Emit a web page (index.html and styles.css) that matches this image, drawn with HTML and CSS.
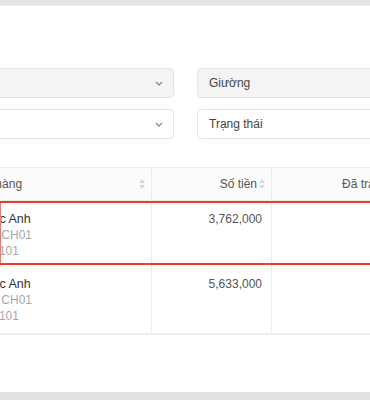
FILE: index.html
```html
<!DOCTYPE html>
<html lang="vi">
<head>
    <meta charset="UTF-8">
    <meta name="viewport" content="width=device-width, initial-scale=1.0">
    <title>Hóa đơn</title>
    <link rel="stylesheet" href="styles.css">
</head>
<body>
    <div class="topbar"></div>

    <div class="page">
        <div class="filters">
            <div class="field field-gray">
                <span class="field-text">Phòng</span>
                <svg class="chevron" width="8" height="5" viewBox="0 0 8 5"><path d="M1 1l3 3 3-3" fill="none" stroke="#8a8a95" stroke-width="1.3"/></svg>
            </div>
            <div class="field field-gray">
                <span class="field-text">Giường</span>
            </div>
            <div class="field">
                <span class="field-text">Tháng</span>
                <svg class="chevron" width="8" height="5" viewBox="0 0 8 5"><path d="M1 1l3 3 3-3" fill="none" stroke="#8a8a95" stroke-width="1.3"/></svg>
            </div>
            <div class="field">
                <span class="field-text">Trạng thái</span>
            </div>
        </div>

        <div class="bills">
            <div class="row head">
                <div class="cell col-customer">
                    <span>Khách hàng</span>
                    <span class="sort"></span>
                </div>
                <div class="cell col-amount">
                    <span>Số tiền</span>
                    <span class="sort"></span>
                </div>
                <div class="cell col-paid">
                    <span>Đã trả</span>
                </div>
            </div>

            <div class="row item selected">
                <div class="cell col-customer">
                    <div class="name">Nguyễn Ngọc Anh</div>
                    <div class="sub">Phòng: CH01</div>
                    <div class="sub">Giường: 101</div>
                </div>
                <div class="cell col-amount">3,762,000</div>
                <div class="cell col-paid"></div>
            </div>

            <div class="row item last">
                <div class="cell col-customer">
                    <div class="name">Nguyễn Ngọc Anh</div>
                    <div class="sub">Phòng: CH01</div>
                    <div class="sub">Giường: 101</div>
                </div>
                <div class="cell col-amount">5,633,000</div>
                <div class="cell col-paid"></div>
            </div>
        </div>
    </div>

    <div class="bottombar"></div>
</body>
</html>
```

FILE: styles.css
```css
body {
    font-family: 'Liberation Sans', Arial, sans-serif;
    font-size: 12px;
    color: #333;
    background-color: #fff;
    margin: 0;
    width: 370px;
    height: 400px;
    overflow: hidden;
    position: relative;
}

.topbar {
    height: 5px;
    background-color: #e4e4e4;
    border-bottom: 1px solid #ececec;
}

.page {
    margin-left: -80px;
    width: 640px;
    padding-top: 62px;
}

.filters {
    display: grid;
    grid-template-columns: 254px 254px;
    column-gap: 23px;
    row-gap: 11px;
}

.field {
    height: 28px;
    border: 1px solid #e3e3e8;
    border-radius: 4px;
    background: #fff;
    display: flex;
    align-items: center;
    justify-content: space-between;
    padding: 0 10px 0 11px;
}

.field-gray {
    background: #f4f4f5;
}

.field-text {
    color: #444;
}

.chevron {
    display: block;
}

/* table */
.bills {
    margin-top: 28px;
    width: 640px;
}

.row {
    display: flex;
    box-sizing: border-box;
}

.cell {
    box-sizing: border-box;
}

.col-customer {
    width: 231px;
}

.col-amount {
    width: 120px;
    border-left: 1px solid #ececf0;
}

.col-paid {
    flex: 1;
    border-left: 1px solid #ececf0;
}

.head {
    height: 34px;
    background: #fcfcfd;
    border-top: 1px solid #ececf0;
    border-bottom: 1px solid #ececf0;
    color: #555;
}

.head .cell {
    display: flex;
    align-items: center;
}

.head .col-customer {
    justify-content: space-between;
    padding: 0 5px 0 38px;
}

.head .col-amount {
    justify-content: flex-end;
    gap: 2px;
    padding-right: 5px;
}

.head .col-paid {
    padding-left: 70px;
}

.sort {
    position: relative;
    width: 7px;
    height: 10px;
}

.sort::before,
.sort::after {
    content: "";
    position: absolute;
    left: 0;
    border-left: 3.5px solid transparent;
    border-right: 3.5px solid transparent;
}

.sort::before {
    top: 0;
    border-bottom: 4px solid #d6d6db;
}

.sort::after {
    bottom: 0;
    border-top: 4px solid #d6d6db;
}

.item {
    line-height: 16px;
}

.item .cell {
    padding-top: 8px;
}

.item .col-customer {
    padding-left: 40px;
}

.item .col-amount {
    text-align: right;
    color: #555;
    padding-right: 9px;
}

.selected {
    position: relative;
    height: 64px;
    border-top: 2px solid #ee3b2a;
    border-bottom: 2px solid #ee3b2a;
}

/* left edge of the selection frame */
.selected::before {
    content: "";
    position: absolute;
    top: 0;
    bottom: 0;
    left: 80px;
    width: 1px;
    background: #f07a6e;
}

.last {
    height: 70px;
    border-bottom: 2px solid #f0f0f3;
}

.last .cell {
    padding-top: 11px;
}

.name {
    color: #333;
    font-size: 12.5px;
    margin-left: -30px;
}

.sub {
    color: #a6a6ad;
}

.sub + .sub {
    margin-left: -9px;
}

.bottombar {
    position: absolute;
    left: 0;
    right: 0;
    bottom: 0;
    height: 8px;
    background: #e2e2e2;
}
```
